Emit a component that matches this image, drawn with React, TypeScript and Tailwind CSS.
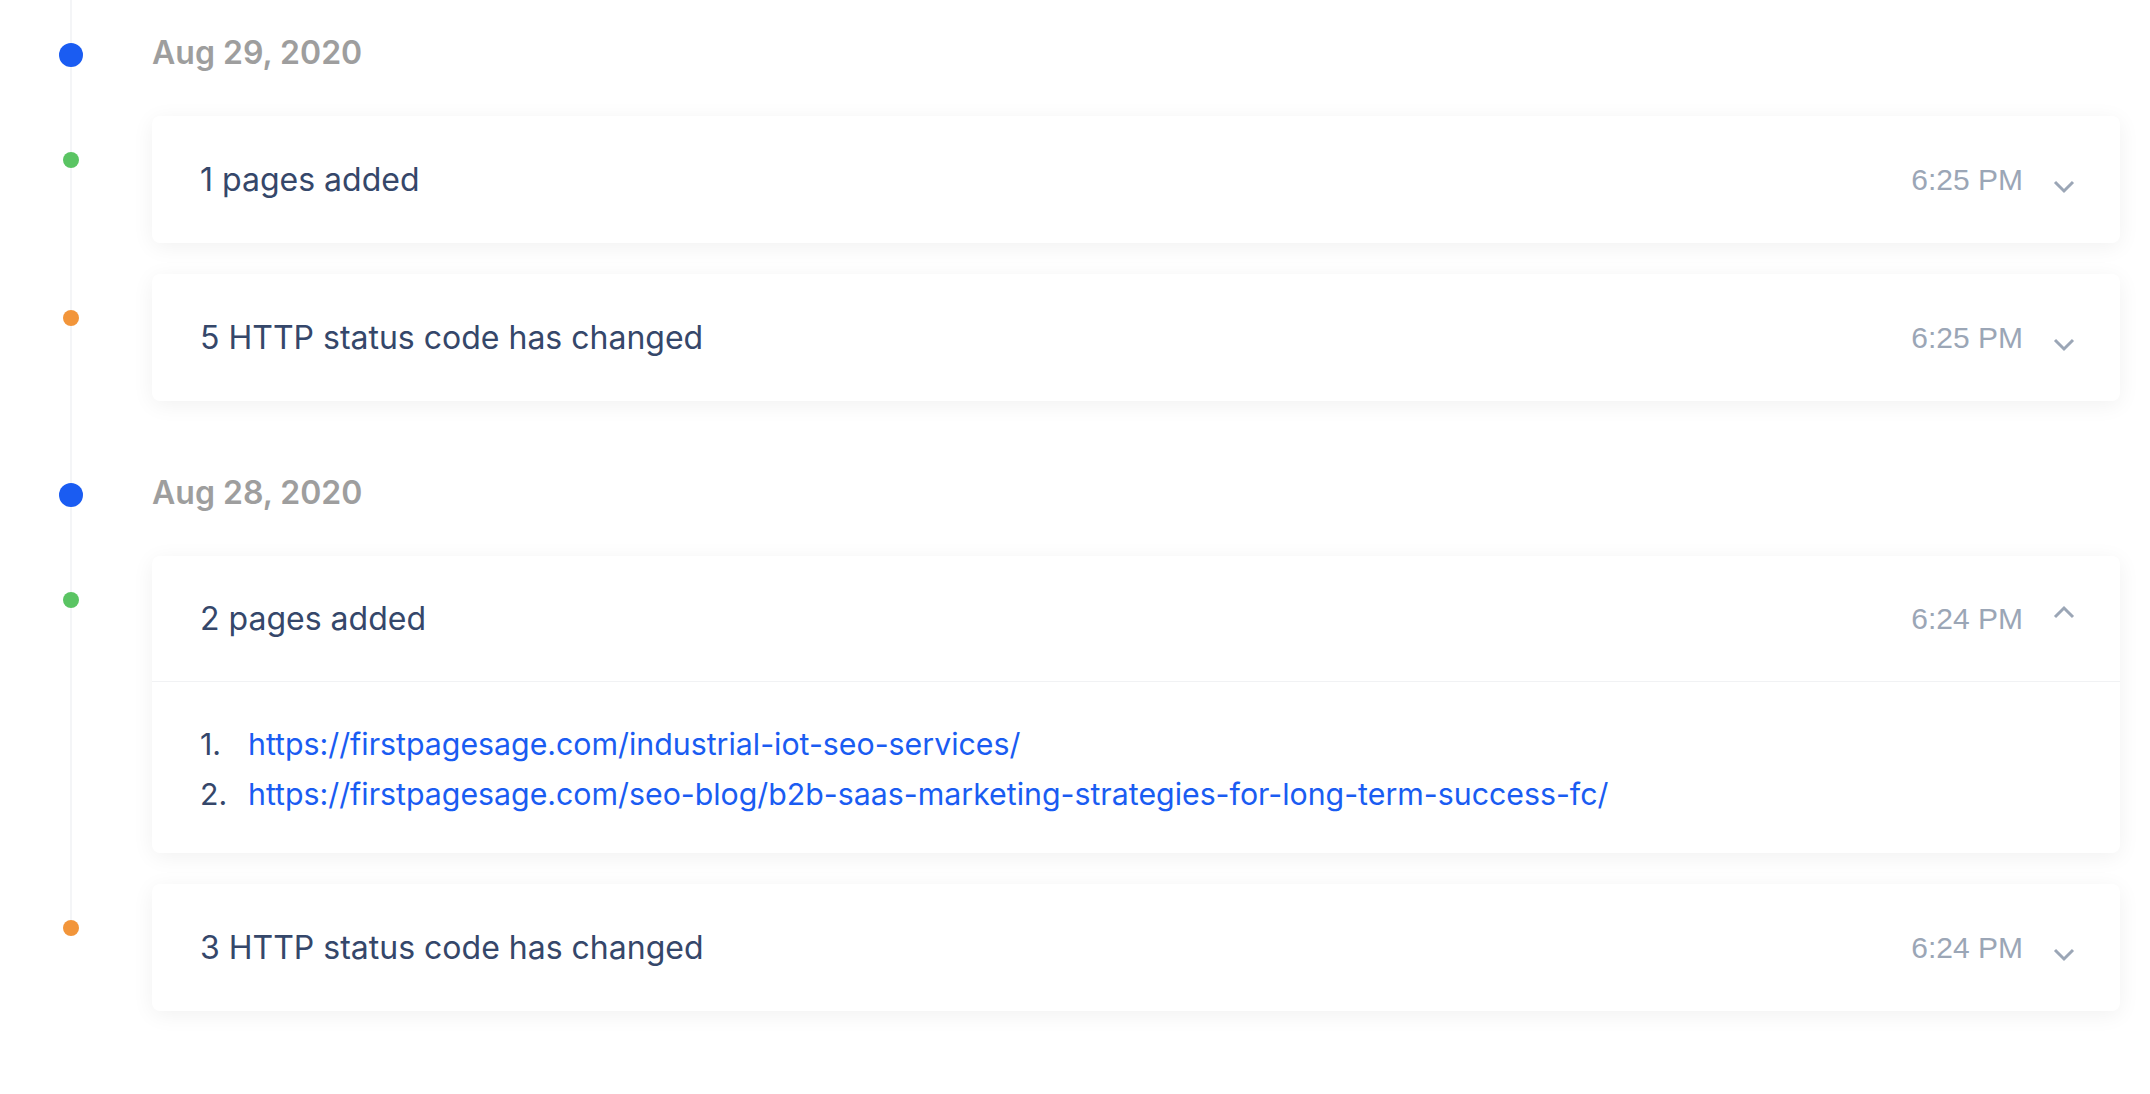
type Entry = {
  id: string;
  title: string;
  time: string;
  kind: "added" | "status";
  links?: string[];
};

type Day = {
  date: string;
  entries: Entry[];
};

const days: Day[] = [
  {
    date: "Aug 29, 2020",
    entries: [
      { id: "a1", title: "1 pages added", time: "6:25 PM", kind: "added" },
      { id: "a2", title: "5 HTTP status code has changed", time: "6:25 PM", kind: "status" },
    ],
  },
  {
    date: "Aug 28, 2020",
    entries: [
      {
        id: "b1",
        title: "2 pages added",
        time: "6:24 PM",
        kind: "added",
        links: [
          "https://firstpagesage.com/industrial-iot-seo-services/",
          "https://firstpagesage.com/seo-blog/b2b-saas-marketing-strategies-for-long-term-success-fc/",
        ],
      },
      { id: "b2", title: "3 HTTP status code has changed", time: "6:24 PM", kind: "status" },
    ],
  },
];

// chevron sits in the lower half of its box; flipping the box moves it to the upper half
const Chevron = ({ open }: { open: boolean }) => (
  <span className={open ? "ml-[30px] flex h-[28px] w-[22px] rotate-180 items-end" : "ml-[30px] flex h-[28px] w-[22px] items-end"}>
    <svg width="22" height="14" viewBox="0 0 22 14" fill="none" className="text-[#9ba6b6]">
      <polyline points="2,2 11,11 20,2" stroke="currentColor" strokeWidth="3" />
    </svg>
  </span>
);

function EntryCard({ entry }: { entry: Entry }) {
  const open = !!entry.links;
  return (
    <div className="flex">
      <div className="flex w-[152px] shrink-0 justify-center pt-[36px] pr-[10px]">
        <span
          className={
            entry.kind === "added"
              ? "relative z-10 h-4 w-4 rounded-full bg-[#5ac463]"
              : "relative z-10 h-4 w-4 rounded-full bg-[#f2953a]"
          }
        />
      </div>
      <div className="flex-1 rounded-lg bg-white shadow-[0_4px_22px_rgba(0,0,0,0.06)]">
        <div
          className={
            open
              ? "flex h-[126px] items-center border-b border-[#f1f2f4] pl-[48px] pr-[45px]"
              : "flex h-[127px] items-center pl-[48px] pr-[45px]"
          }
        >
          <span className="flex-1 font-['Inter'] text-[32px] text-[#35476a]">{entry.title}</span>
          <span className="font-['Liberation_Sans'] text-[30px] text-[#9ba6b6]">{entry.time}</span>
          <Chevron open={open} />
        </div>
        {open && (
          <ol className="flex flex-col gap-[14px] pt-[44px] pb-[41px] pl-[48px] font-['Inter'] text-[30.3px]">
            {entry.links!.map((link, i) => (
              <li key={link} className="flex leading-[36px]">
                <span className="w-[48px] shrink-0 text-[#35476a]">{i + 1}.</span>
                <a href={link} className="text-[#1a5cf2]">
                  {link}
                </a>
              </li>
            ))}
          </ol>
        )}
      </div>
    </div>
  );
}

export default function App() {
  return (
    <div className="min-h-screen bg-white pr-[30px]">
      <div className="relative">
        {/* timeline rail, stops at the last dot */}
        <div className="absolute top-0 left-[70px] h-[928px] w-[2px] bg-[#f4f5f7]" />
        <div className="flex flex-col">
          {days.map((day, di) => (
            <div key={day.date} className={di === 0 ? "flex flex-col" : "mt-[39px] flex flex-col"}>
              <div className="flex h-[80px] items-center pt-[30px]">
                <div className="flex w-[152px] shrink-0 justify-center pr-[10px]">
                  <span className="relative z-10 h-6 w-6 rounded-full bg-[#1a5cf2]" />
                </div>
                <span className="pb-[5px] font-['Inter'] text-[32px] font-semibold text-[#9e9e9e]">{day.date}</span>
              </div>
              <div className="mt-[36px] flex flex-col gap-[31px]">
                {day.entries.map((e) => (
                  <EntryCard key={e.id} entry={e} />
                ))}
              </div>
            </div>
          ))}
        </div>
      </div>
    </div>
  );
}
